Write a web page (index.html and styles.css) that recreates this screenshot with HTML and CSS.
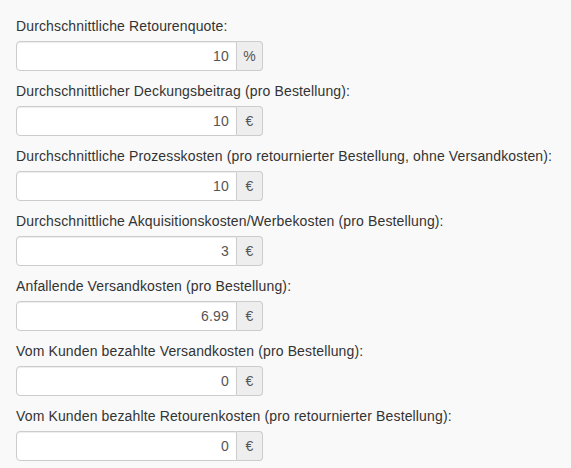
FILE: index.html
```html
<!DOCTYPE html>
<html lang="de">
<head>
    <meta charset="UTF-8">
    <meta name="viewport" content="width=device-width, initial-scale=1.0">
    <title>Retourenkosten</title>
    <link rel="stylesheet" href="styles.css">
</head>
<body>
    <form class="calc-form">
        <div class="form-group">
            <label for="quote">Durchschnittliche Retourenquote:</label>
            <div class="input-group">
                <input type="text" id="quote" value="10">
                <span class="addon">%</span>
            </div>
        </div>
        <div class="form-group">
            <label for="db">Durchschnittlicher Deckungsbeitrag (pro Bestellung):</label>
            <div class="input-group">
                <input type="text" id="db" value="10">
                <span class="addon">€</span>
            </div>
        </div>
        <div class="form-group">
            <label for="prozess">Durchschnittliche Prozesskosten (pro retournierter Bestellung, ohne Versandkosten):</label>
            <div class="input-group">
                <input type="text" id="prozess" value="10">
                <span class="addon">€</span>
            </div>
        </div>
        <div class="form-group">
            <label for="akquise">Durchschnittliche Akquisitionskosten/Werbekosten (pro Bestellung):</label>
            <div class="input-group">
                <input type="text" id="akquise" value="3">
                <span class="addon">€</span>
            </div>
        </div>
        <div class="form-group">
            <label for="versand">Anfallende Versandkosten (pro Bestellung):</label>
            <div class="input-group">
                <input type="text" id="versand" value="6.99">
                <span class="addon">€</span>
            </div>
        </div>
        <div class="form-group">
            <label for="kunde-versand">Vom Kunden bezahlte Versandkosten (pro Bestellung):</label>
            <div class="input-group">
                <input type="text" id="kunde-versand" value="0">
                <span class="addon">€</span>
            </div>
        </div>
        <div class="form-group">
            <label for="kunde-retoure">Vom Kunden bezahlte Retourenkosten (pro retournierter Bestellung):</label>
            <div class="input-group">
                <input type="text" id="kunde-retoure" value="0">
                <span class="addon">€</span>
            </div>
        </div>
    </form>
</body>
</html>
```

FILE: styles.css
```css
body {
    margin: 0;
    padding: 16px;
    background: #f9f9f9;
    font-family: 'Liberation Sans', Arial, sans-serif;
    font-size: 14px;
    line-height: 20px;
    color: #333;
}
.form-group {
    margin-bottom: 10px;
}
label {
    display: block;
    margin-bottom: 5px;
    font-weight: normal;
    letter-spacing: 0.14px;
    white-space: nowrap;
}
.input-group {
    display: flex;
    width: 247px;
    height: 30px;
}
.input-group input {
    flex: 1;
    min-width: 0;
    box-sizing: border-box;
    height: 30px;
    margin: 0;
    padding: 5px 7px;
    border: 1px solid #ccc;
    border-radius: 4px 0 0 4px;
    background: #fff;
    box-shadow: inset 0 1px 1px rgba(0, 0, 0, 0.075);
    font-family: inherit;
    font-size: 14px;
    letter-spacing: 0.2px;
    color: #555;
    text-align: right;
    outline: none;
}
.addon {
    box-sizing: border-box;
    width: 26px;
    height: 30px;
    display: flex;
    align-items: center;
    justify-content: center;
    border: 1px solid #ccc;
    border-left: 0;
    border-radius: 0 4px 4px 0;
    background: #eee;
    color: #555;
    font-size: 14px;
}
```
